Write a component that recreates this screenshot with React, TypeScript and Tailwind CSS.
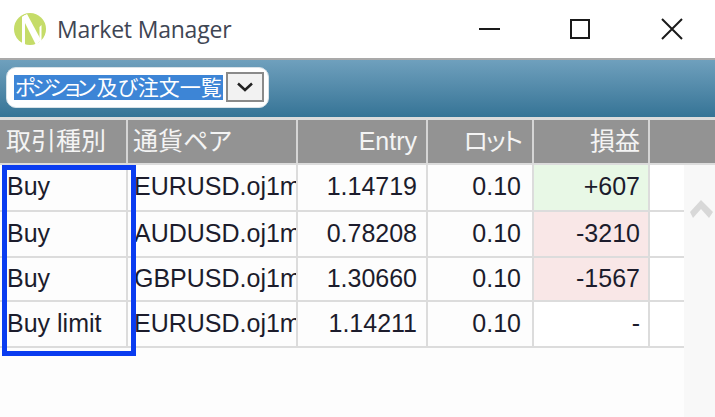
const headers = [
  { label: "取引種別", w: "w-[128px]", align: "text-left pl-[6px]" },
  { label: "通貨ペア", w: "w-[170px]", align: "text-left pl-[5px]" },
  { label: "Entry", w: "w-[130px]", align: "text-right pr-[9px]" },
  { label: "ロット", w: "w-[106px]", align: "text-right pr-[11px] tracking-[-2px]" },
  { label: "損益", w: "w-[116px]", align: "text-right pr-[8px]" },
  { label: "", w: "w-[65px]", align: "" },
];

const rows = [
  { h: "h-[47px]", type: "Buy", pair: "EURUSD.oj1m", entry: "1.14719", lot: "0.10", pl: "+607", bg: "bg-[#e8f8e6]" },
  { h: "h-[46px]", type: "Buy", pair: "AUDUSD.oj1m", entry: "0.78208", lot: "0.10", pl: "-3210", bg: "bg-[#f9e7e7]" },
  { h: "h-[44px]", type: "Buy", pair: "GBPUSD.oj1m", entry: "1.30660", lot: "0.10", pl: "-1567", bg: "bg-[#f9e7e7]" },
  { h: "h-[46px]", type: "Buy limit", pair: "EURUSD.oj1m", entry: "1.14211", lot: "0.10", pl: "-", bg: "bg-white" },
];

const cell = "flex items-center pb-[2px] border-r-2 border-b-2 border-[#dcdcdc] overflow-hidden whitespace-nowrap";

export default function App() {
  return (
    <div className="relative w-[715px] h-[417px] overflow-hidden bg-[#fdfdfd] font-['Liberation_Sans','Noto_Sans_CJK_JP',sans-serif]">
      <div className="h-[58px] bg-white flex items-center pl-[14px]">
        <svg width="32" height="32" viewBox="0 0 32 32" className="mr-[11px]">
          <circle cx="16" cy="16" r="16" fill="#c5dc68" />
          <path d="M8 4 L11 2 L11 33 L8 33 Z" fill="#fff" />
          <path d="M8 4 L13 1 L27 27 L22 32 Z" fill="#fff" />
          <path d="M25.5 14 L27.5 12 L27.5 33 L25.5 33 Z" fill="#fff" />
        </svg>
        <span className="text-[23px] text-[#3f4654] font-['Open_Sans',sans-serif] leading-none tracking-[-0.2px]">Market Manager</span>
        <div className="ml-auto flex items-center">
          <svg width="22" height="4" viewBox="0 0 22 4" className="mr-[68px]">
            <rect y="1" width="21" height="2" fill="#1a1a1a" />
          </svg>
          <svg width="22" height="22" viewBox="0 0 22 22" className="mr-[70px]">
            <rect x="2" y="2" width="18" height="18" fill="none" stroke="#1a1a1a" strokeWidth="2" />
          </svg>
          <svg width="22" height="22" viewBox="0 0 22 22" className="mr-[32px]">
            <path d="M1 1 L21 21 M21 1 L1 21" stroke="#1a1a1a" strokeWidth="2" />
          </svg>
        </div>
      </div>
      <div className="h-[59px] border-t-2 border-[#a9a9a9] bg-gradient-to-b from-[#6fa0bd] to-[#357496] flex items-center pl-[6px]">
        <div className="w-[263px] h-[41px] mb-[3px] bg-white rounded-[10px] border border-[#d8e2e8] flex items-center pl-[7px] pr-[4px]">
          <span className="h-[25px] w-[209px] pl-[1px] bg-[#3d85d6] text-white text-[21px] leading-[25px] whitespace-nowrap [font-feature-settings:'palt']">
            <span className="tracking-[-3.4px] mr-[4px]">ポジション</span>
            <span>及び注文一覧</span>
          </span>
          <span className="w-[38px] h-[30px] ml-auto bg-[#f2f2f2] border-2 border-[#8a8a8a] flex items-center justify-center">
            <svg width="18" height="10" viewBox="0 0 18 10">
              <path d="M2 1.5 L9 8 L16 1.5" fill="none" stroke="#222" strokeWidth="2.5" />
            </svg>
          </span>
        </div>
      </div>
      <div className="flex h-[48px] bg-[#dcdcdc] pt-[3px] pb-[2px]">
        {headers.map((h, i) => (
          <div
            key={i}
            className={`${h.w} ${h.align} h-full bg-[#939393] border-r-2 border-[#d5d5d5] text-[#f4f4f4] text-[25px] leading-[42px] whitespace-nowrap last:border-r-0 [font-feature-settings:'palt']`}
          >
            {h.label}
          </div>
        ))}
      </div>
      <div className="flex">
        <div className="w-[684px] text-[25px] leading-none text-[#1c1c2c]">
          {rows.map((r, i) => (
            <div key={i} className={`flex ${r.h}`}>
              <div className={`${cell} w-[128px] pl-[7px]`}>{r.type}</div>
              <div className={`${cell} w-[170px] pl-[6px]`}>{r.pair}</div>
              <div className={`${cell} w-[130px] justify-end pr-[9px]`}>{r.entry}</div>
              <div className={`${cell} w-[106px] justify-end pr-[11px]`}>{r.lot}</div>
              <div className={`${cell} w-[116px] justify-end pr-[8px] ${r.bg}`}>{r.pl}</div>
              <div className="w-[34px] border-b-2 border-[#dcdcdc] bg-white" />
            </div>
          ))}
        </div>
        <div className="w-[31px] h-[252px] bg-[#f8f8f8] flex justify-center pt-[34px]">
          <svg width="24" height="20" viewBox="0 0 24 20" className="ml-[3px]">
            <path d="M12 1 L24 13 L20 19 L12 10 L4 19 L1 13 Z" fill="#d8d8d8" />
          </svg>
        </div>
      </div>
      <div className="absolute left-[2px] top-[165px] w-[134px] h-[191px] border-[5px] border-[#0a3cf0]" />
    </div>
  );
}
